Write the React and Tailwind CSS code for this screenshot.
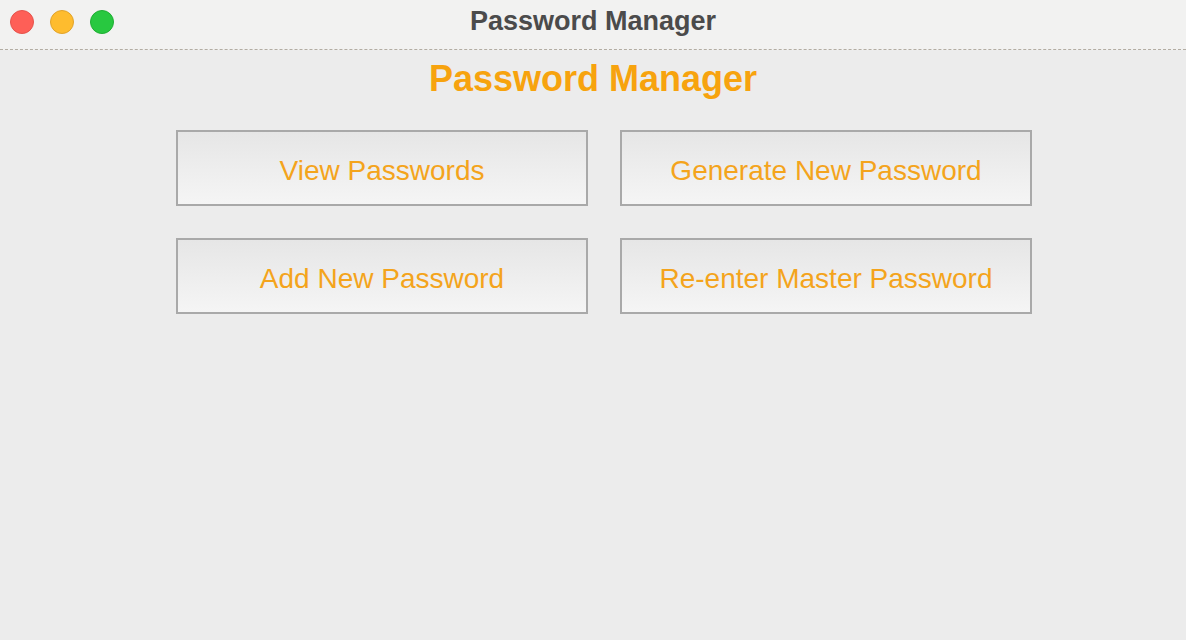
export default function App() {
  const btn =
    "h-[76px] pt-[6px] border-2 border-[#a9a9a9] bg-gradient-to-b from-[#e6e6e6] to-[#f5f5f5] flex items-center justify-center text-[28px] text-[#f4a41c] leading-none";
  return (
    <div className="w-[1186px] h-[640px] bg-[#ececec] flex flex-col" style={{ fontFamily: '"Liberation Sans", Arial, sans-serif' }}>
      <div className="relative h-[50px] bg-[#f2f2f1] border-b border-dashed border-[#b3ada3] flex items-center justify-center shrink-0">
        <div className="absolute left-[10px] top-[10px] flex gap-[16px]">
          <div className="w-[24px] h-[24px] rounded-full bg-[#fe5f57] border border-[#e5534b]" />
          <div className="w-[24px] h-[24px] rounded-full bg-[#febc2e] border border-[#e1a32a]" />
          <div className="w-[24px] h-[24px] rounded-full bg-[#28c840] border border-[#1fae33]" />
        </div>
        <div className="text-[27px] font-bold text-[#4b4b4b] leading-none -mt-[6px]">Password Manager</div>
      </div>
      <div className="flex flex-col">
        <div className="text-center text-[36px] font-bold text-[#f7a30e] leading-[40px] mt-[9px]">Password Manager</div>
        <div className="ml-[176px] mt-[31px] w-[856px] grid grid-cols-2 gap-x-[32px] gap-y-[32px]">
          <div className={btn}>View Passwords</div>
          <div className={btn}>Generate New Password</div>
          <div className={btn}>Add New Password</div>
          <div className={btn}>Re-enter Master Password</div>
        </div>
      </div>
    </div>
  );
}
